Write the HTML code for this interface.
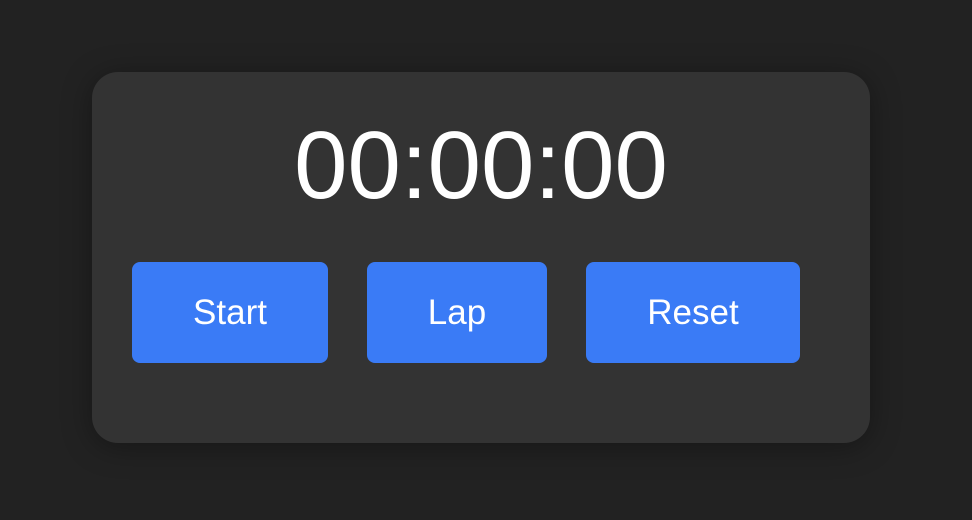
<!DOCTYPE html>
<html><head><style>
html,body{margin:0;padding:0;width:972px;height:520px;background:#222222;overflow:hidden;font-family:"Liberation Sans",Arial,sans-serif;}
.card{position:absolute;left:92px;top:72px;width:778px;height:371px;background:#333333;border-radius:26px;box-shadow:0 4px 30px rgba(0,0,0,0.35);}
.time{position:absolute;left:92px;width:778px;top:111px;text-align:center;color:#fff;font-size:96px;line-height:110px;}
.btn{position:absolute;top:262px;height:101px;background:#3a7bf6;border-radius:8px;color:#fff;font-size:35px;display:flex;align-items:center;justify-content:center;}
</style></head><body>
<div class="card"></div>
<div class="time">00:00:00</div>
<div class="btn" style="left:132px;width:196px;">Start</div>
<div class="btn" style="left:367px;width:180px;">Lap</div>
<div class="btn" style="left:586px;width:214px;">Reset</div>
</body></html>
